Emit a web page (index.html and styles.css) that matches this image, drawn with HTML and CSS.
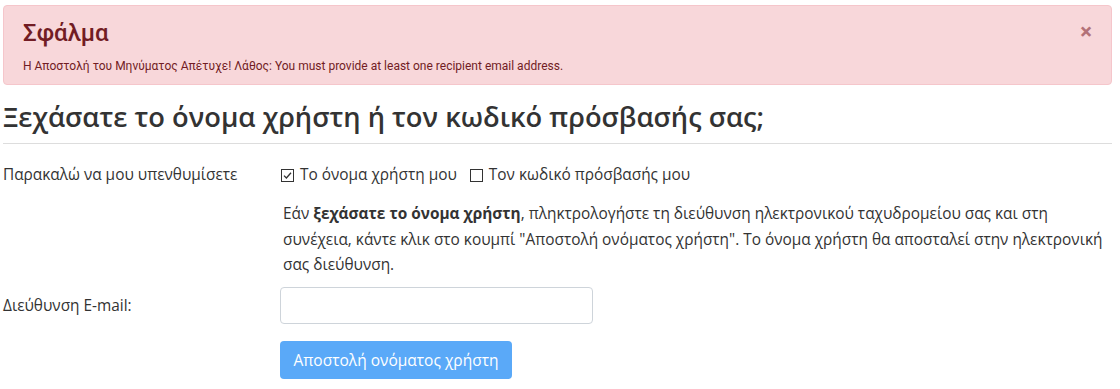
FILE: index.html
```html
<!DOCTYPE html>
<html lang="el">
<head>
<meta charset="utf-8">
<link rel="stylesheet" href="styles.css">
</head>
<body>
<div class="page">
  <div class="alert">
    <div class="alert-body">
      <h4 class="alert-title">Σφάλμα</h4>
      <p class="alert-msg">Η Αποστολή του Μηνύματος Απέτυχε! Λάθος: You must provide at least one recipient email address.</p>
    </div>
    <span class="alert-close">×</span>
  </div>

  <h1 class="title">Ξεχάσατε το όνομα χρήστη ή τον κωδικό πρόσβασής σας;</h1>
  <hr class="rule">

  <form class="form">
    <div class="row row-check">
      <div class="label">Παρακαλώ να μου υπενθυμίσετε</div>
      <div class="field checks">
        <label class="check"><span class="box"><svg viewBox="0 0 13 13" width="13" height="13"><rect x="0.5" y="0.5" width="12" height="12" fill="#fff" stroke="#333"/><path d="M3 6.6 L5.4 9 L10 3.8" fill="none" stroke="#333" stroke-width="1.3"/></svg></span>Το όνομα χρήστη μου</label>
        <label class="check"><span class="box"><svg viewBox="0 0 13 13" width="13" height="13"><rect x="0.5" y="0.5" width="12" height="12" fill="#fff" stroke="#333"/></svg></span>Τον κωδικό πρόσβασής μου</label>
      </div>
    </div>
    <div class="row row-help">
      <div class="label"></div>
      <p class="field help">Εάν <strong>ξεχάσατε το όνομα χρήστη</strong>, πληκτρολογήστε τη διεύθυνση ηλεκτρονικού ταχυδρομείου σας και στη συνέχεια, κάντε κλικ στο κουμπί "Αποστολή ονόματος χρήστη". Το όνομα χρήστη θα αποσταλεί στην ηλεκτρονική σας διεύθυνση.</p>
    </div>
    <div class="row row-email">
      <div class="label">Διεύθυνση E-mail:</div>
      <div class="field"><input class="input" type="text"></div>
    </div>
    <div class="row row-btn">
      <div class="label"></div>
      <div class="field"><button class="btn" type="button">Αποστολή ονόματος χρήστη</button></div>
    </div>
  </form>
</div>
</body>
</html>
```

FILE: styles.css
```css
html, body { margin: 0; padding: 0; background: #fff; }
body { font-family: "Open Sans", "Noto Sans", sans-serif; color: #333; }
.page { padding: 5px 8px 0 3px; }

.alert {
  display: flex;
  justify-content: space-between;
  background: #f8d7da;
  border: 1px solid #f5c6cb;
  border-radius: 4px;
  height: 78px;
  padding: 0;
}
.alert-body { padding: 12px 0 0 19px; font-family: Roboto, sans-serif; color: #721c24; }
.alert-title { margin: 0; font-size: 24px; font-weight: 500; line-height: 30px; }
.alert-msg { margin: 10px 0 0; font-size: 12px; line-height: 16px; }
.alert-close { font-family: Roboto, sans-serif; font-weight: 700; font-size: 22px; color: #a86067; line-height: 22px; padding: 15px 19px 0 0; opacity: 0.85; }

.title {
  margin: 12px 0 0;
  font-size: 27.3px;
  font-weight: 600;
  line-height: 40px;
  color: #333;
}
.rule { margin: 6px 0 0; border: 0; border-top: 1px solid #ddd; }

.form { font-size: 15.4px; }
.row { display: flex; }
.label { width: 277px; flex: none; }
.field { flex: 1; min-width: 0; }
.row-check { margin-top: 20px; line-height: 22px; }
.checks { display: flex; gap: 12px; }
.check { display: inline-flex; align-items: center; gap: 6px; }
.box { display: inline-flex; width: 13px; height: 13px; margin-left: 1px; }
.row-help { margin-top: 15px; }
.help { margin: 0 0 0 3px; line-height: 25.5px; }
.row-email { margin-top: 9px; align-items: center; }
.input { width: 313px; height: 37px; box-sizing: border-box; border: 1px solid #ced4da; border-radius: 4px; }
.row-btn { margin-top: 17px; }
.btn {
  height: 38px; width: 232px;
  background: #5aa9f8; border: 0; border-radius: 4px; color: #fff;
  font-family: "Open Sans", sans-serif; font-size: 15.5px; padding: 0;
}
```
